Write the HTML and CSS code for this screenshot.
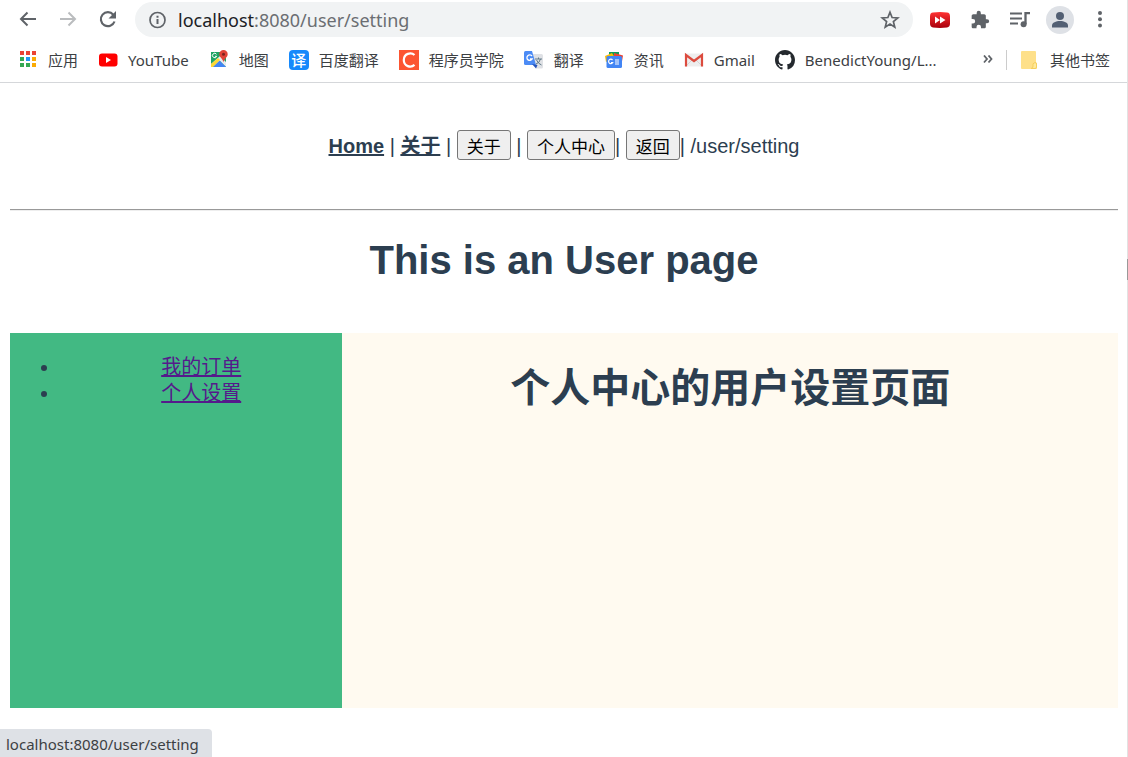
FILE: index.html
```
<!DOCTYPE html>
<html lang="zh-CN">
<head>
<meta charset="utf-8">
<title>User setting</title>
<link rel="stylesheet" href="styles.css">
</head>
<body>
<header class="browser">
  <div class="toolbar">
    <button class="tool" aria-label="Back"><svg width="20" height="20" viewBox="0 0 20 20" fill="none" stroke="#5f6368" stroke-width="2"><path d="M18 9H3M9.500 2.500 3 9l6.500 6.500"/></svg></button>
    <button class="tool" aria-label="Forward"><svg width="20" height="20" viewBox="0 0 20 20" fill="none" stroke="#babcbe" stroke-width="2"><path d="M2 9h15M10.500 2.500 17 9l-6.500 6.500"/></svg></button>
    <button class="tool" aria-label="Reload"><svg width="20" height="20" viewBox="0 0 20 20"><path d="M15.300 4.700A7 7 0 1 0 16.500 11.500" fill="none" stroke="#5f6368" stroke-width="2.200"/><path d="M18 1v7.500h-7.500z" fill="#5f6368"/></svg></button>
    <div class="address">
      <svg class="info" width="18" height="18" viewBox="0 0 18 18"><circle cx="9.500" cy="9" r="7.500" fill="none" stroke="#5f6368" stroke-width="1.700"/><path d="M9.500 8v5M9.500 4.800v1.900" stroke="#5f6368" stroke-width="2"/></svg>
      <span class="url"><span class="host">localhost</span>:8080/user/setting</span>
      <button class="tool" aria-label="Bookmark this page"><svg width="20" height="20" viewBox="0 0 20 20"><path d="m10 2.200 2.100 5.300 5.700.4-4.400 3.700 1.400 5.600-4.800-3.100-4.800 3.100 1.400-5.600-4.400-3.700 5.700-.4z" fill="none" stroke="#5f6368" stroke-width="1.700"/></svg></button>
    </div>
    <button class="tool" aria-label="Fast forward"><svg width="20" height="20" viewBox="0 0 20 20"><defs><linearGradient id="red" x2="0" y2="1"><stop stop-color="#f33"/><stop offset="1" stop-color="#a9000c"/></linearGradient></defs><path d="M3 2.500q7-1 14 0 3 .2 3 4v7q0 3.500-3 4-7 .8-14 0-3-.5-3-4v-7q0-3.800 3-4z" fill="url(#red)"/><path d="m5 6.500 5 3.500-5 3.500zm5 0 5.500 3.500-5.500 3.500z" fill="#fff"/></svg></button>
    <button class="tool" aria-label="Extensions"><svg width="20" height="20" viewBox="0 0 24 24"><path fill="#5f6368" d="M20.500 11H19V7c0-1.100-.9-2-2-2h-4V3.500a2.500 2.500 0 0 0-5 0V5H4c-1.100 0-2 .9-2 2v3.800h1.500a2.700 2.700 0 0 1 0 5.400H2V20c0 1.100.9 2 2 2h3.800v-1.500a2.700 2.700 0 0 1 5.400 0V22H17c1.100 0 2-.9 2-2v-4h1.500a2.500 2.500 0 0 0 0-5z"/></svg></button>
    <button class="tool" aria-label="Media"><svg width="20" height="20" viewBox="0 0 20 20"><path d="M0 3.500h12M0 8.500h12M0 13.500h8" stroke="#5f6368" stroke-width="2"/><path d="M15.500 14V3.200H20" fill="none" stroke="#5f6368" stroke-width="2.300"/><circle cx="13.600" cy="14.300" r="3" fill="#5f6368"/></svg></button>
    <button class="tool profile" aria-label="Profile"><svg width="28" height="28" viewBox="0 0 28 28"><circle cx="14" cy="14" r="14" fill="#dee1e6"/><circle cx="14" cy="10" r="4" fill="#525f73"/><path d="M6 21.500v-2c0-6 16-6 16 0v2z" fill="#525f73"/></svg></button>
    <button class="tool menu" aria-label="Menu"><svg width="20" height="20" viewBox="0 0 20 20" fill="#5f6368"><circle cx="10" cy="3" r="2"/><circle cx="10" cy="9.300" r="2"/><circle cx="10" cy="15.600" r="2"/></svg></button>
  </div>
  <nav class="bookmarks" aria-label="Bookmarks">
    <a class="bookmark" href="#"><svg width="20" height="20" viewBox="0 0 20 20"><path fill="#ea4335" d="M2 1h4v4H2zm6 0h4v4H8zm6 0h4v4h-4z"/><path fill="#34a853" d="M2 7h4v4H2zm0 6h4v4H2zm6 0h4v4H8z"/><path fill="#2196f3" d="M8 7h4v4H8z"/><path fill="#fbab05" d="M14 7h4v4h-4zm0 6h4v4h-4z"/></svg>应用</a>
    <a class="bookmark" href="#"><svg width="20" height="20" viewBox="0 0 20 20"><rect x="1" y="3.500" width="18.500" height="13" rx="3" fill="#f00"/><path d="m8 7 5 3-5 3z" fill="#fff"/></svg>YouTube</a>
    <a class="bookmark" href="#"><svg width="20" height="20" viewBox="0 0 20 20"><path d="M2 2h15v15H2z" fill="#1fa463"/><path d="m2 14 9-8 6 6v5l-6-6-7 6H2z" fill="#e8eaed"/><path d="m3.500 17 7-6.500 6.500 6.500z" fill="#4285f4"/><path d="m2 14 7-6 2 2-7 7H2z" fill="#fdd835"/><path d="M7.500 4.300a2.200 2.200 0 1 0 .2 2H6" fill="none" stroke="#fff"/><path d="M14.500 0a4.200 4.200 0 0 0-4.200 4.200c0 3 3.200 3.800 4.200 8 1-4.200 4.200-5 4.200-8A4.200 4.200 0 0 0 14.500 0z" fill="#e04437"/><circle cx="14.500" cy="4.200" r="1.500" fill="#7b231e"/></svg>地图</a>
    <a class="bookmark" href="#"><span class="badge">译</span>百度翻译</a>
    <a class="bookmark" href="#"><svg width="20" height="20" viewBox="0 0 20 20"><path fill="#fc5531" d="M0 0h20v20H0z"/><path d="M15.500 5C12 1.800 4.800 3.500 4.800 10s7 8.200 10.700 4.900" fill="none" stroke="#fff" stroke-width="2.200"/></svg>程序员学院</a>
    <a class="bookmark" href="#"><svg width="20" height="20" viewBox="0 0 20 20"><path d="M8 4h9.500q1.500 0 1.500 1.500V17q0 1.500-1.500 1.500H12z" fill="#dfe1e5"/><path d="M11 9h7M14.500 7.500V9m2 0q-1 4-4.500 5m.5-4q2 4 5 5" fill="none" stroke="#607988"/><path d="M1.500 1H8l4 14H1.500Q0 15 0 13.500v-11Q0 1 1.500 1z" fill="#4c8bf5"/><path d="m8 14 4 4.500 1.500-3.500z" fill="#2653b8"/><path d="M8 6a2.800 2.800 0 1 0 .2 3H6" fill="none" stroke="#fff" stroke-width="1.300"/></svg>翻译</a>
    <a class="bookmark" href="#"><svg width="20" height="20" viewBox="0 0 20 20"><path d="M5 2h10v6H5z" fill="#109d59"/><path d="m1 6 7-3 3 5-9 4z" fill="#fbbc04"/><path d="m10 3 9 2.500-1 6-8-2z" fill="#ea4335"/><rect x="2.500" y="6" width="15.500" height="12" rx="1.500" fill="#4285f4"/><path d="M8.500 10a2.200 2.200 0 1 0 .2 2.500H7M11 10h4M11 12h4M11 14h4" fill="none" stroke="#fff" stroke-width="1.200"/></svg>资讯</a>
    <a class="bookmark" href="#"><svg width="20" height="20" viewBox="0 0 20 20"><path d="M1 3.500h18v13H1z" fill="#eee"/><path d="m2 16 6-6m10 6-6-6" stroke="#d5d5d5"/><path d="M2 16.500V5l8 6 8-6v11.500" fill="none" stroke="#dc4b3e" stroke-width="2.200"/></svg>Gmail</a>
    <a class="bookmark" href="#"><svg width="20" height="20" viewBox="0 0 16 16"><path fill="#24292e" d="M8 0C3.580 0 0 3.580 0 8c0 3.540 2.290 6.530 5.470 7.590.4.070.55-.17.55-.38 0-.19-.01-.82-.01-1.490-2.010.37-2.530-.49-2.690-.94-.09-.23-.48-.94-.82-1.130-.28-.15-.68-.52-.01-.53.63-.01 1.080.58 1.230.82.72 1.210 1.870.87 2.330.66.070-.52.28-.87.51-1.070-1.780-.2-3.640-.89-3.640-3.950 0-.87.31-1.590.82-2.150-.08-.2-.36-1.020.08-2.120 0 0 .67-.21 2.200.82a7.600 7.600 0 0 1 4 0c1.530-1.040 2.200-.82 2.200-.82.44 1.100.16 1.920.08 2.120.51.56.82 1.270.82 2.150 0 3.070-1.870 3.750-3.650 3.950.29.25.54.73.54 1.480 0 1.070-.01 1.930-.01 2.200 0 .21.15.46.55.38A8 8 0 0 0 16 8c0-4.420-3.580-8-8-8z"/></svg>BenedictYoung/L...</a>
    <button class="more" aria-label="More bookmarks"><svg width="10" height="10" viewBox="0 0 10 10" fill="none" stroke="#5f6368" stroke-width="1.800"><path d="m1 .5 3 3.500-3 3.500m4.500-7 3 3.500-3 3.500"/></svg></button>
    <a class="bookmark other" href="#"><svg width="20" height="20" viewBox="0 0 20 20"><path d="M2 1h13q1 0 1 1v10l1 2v4q0 1-1 1H2q-1 0-1-1V2q0-1 1-1z" fill="#fee08a"/><path d="M15 12.500q-3 1-2 3.500.5 2-2 2.500h4q1.500 0 1.500-1.500v-3q0-1.500-1.500-1.500z" fill="#ffe99d" stroke="#f5cf5c"/></svg>其他书签</a>
  </nav>
</header>
<main class="page">
  <nav class="links"><a href="#">Home</a> | <a href="#">关于</a> | <button>关于</button> | <button>个人中心</button>| <button>返回</button>| /user/setting</nav>
  <hr>
  <h1>This is an User page</h1>
  <div class="panels">
    <aside class="side">
      <ul>
        <li><a href="#">我的订单</a></li>
        <li><a href="#">个人设置</a></li>
      </ul>
    </aside>
    <section class="content"><h1>个人中心的用户设置页面</h1></section>
  </div>
</main>
<div class="status">localhost:8080/user/setting</div>
<div class="edge"><div class="thumb"></div></div>
</body>
</html>
```
FILE: styles.css
```
* {
  box-sizing: border-box;
}

body {
  margin: 0;
  background: #fff;
  color: #2c3e50;
  font: 20px "Liberation Sans", "Noto Sans CJK SC", sans-serif;
  overflow: hidden;
}

.browser {
  height: 83px;
  border-bottom: 1px solid #d5d7da;
  font-family: "Noto Sans", "Noto Sans CJK SC", sans-serif;
}

.toolbar {
  display: flex;
  align-items: center;
  gap: 20px;
  height: 39px;
  padding: 0 18px;
}

.tool,
.more {
  display: flex;
  flex: none;
  padding: 0;
  border: 0;
  background: none;
}

.profile,
.menu {
  margin-left: -4px;
}

.address {
  display: flex;
  flex: 1;
  align-items: center;
  height: 35px;
  margin-left: -3px;
  margin-right: -3px;
  padding: 0 13px;
  border-radius: 18px;
  background: #f1f3f4;
}

.info {
  flex: none;
}

.url {
  flex: 1;
  margin-left: 12px;
  color: #6b6e72;
  font-size: 18px;
  line-height: 24px;
}

.host {
  color: #202124;
}

.bookmarks {
  display: flex;
  align-items: center;
  gap: 20px;
  height: 42px;
  padding: 0 18px;
}

.bookmark {
  display: flex;
  flex: none;
  align-items: center;
  gap: 10px;
  color: #3c4043;
  font-size: 15px;
  line-height: 20px;
  text-decoration: none;
}

.badge {
  width: 20px;
  height: 20px;
  border-radius: 4px;
  background: #1689fb;
  color: #fff;
  font-weight: 500;
  text-align: center;
}

.more {
  margin-left: auto;
  margin-right: -7px;
}

.other {
  padding-left: 13px;
  border-left: 1px solid #ccc;
}

.page {
  padding: 0 10px;
  text-align: center;
}

.links {
  padding: 47px 0 48px;
  line-height: 30px;
}

.links a {
  color: #2c3e50;
  font-weight: bold;
}

.links button {
  height: 30px;
  padding: 0 9px;
  border: 1px solid #767676;
  border-radius: 3px;
  background: #efefef;
  color: #000;
  font: 17px "Liberation Sans", "Noto Sans CJK SC", sans-serif;
}

hr {
  margin: 0;
  border: 0;
  border-top: 1px solid #999;
  border-bottom: 1px solid #eee;
}

h1 {
  margin: 26px 0 50px;
  font-size: 40px;
  line-height: 46px;
}

.panels {
  display: flex;
  min-height: 375px;
}

.side {
  width: 30%;
  background: #42b983;
}

.side ul {
  margin: 21px 0;
  padding-left: 50px;
}

.side li {
  line-height: 26px;
}

.side a {
  color: #551a8b;
}

.content {
  flex: 1;
  background: #fffaf0;
}

.content h1 {
  margin-top: 32px;
}

.status {
  position: fixed;
  left: 0;
  bottom: 0;
  padding: 5px 13px 3px 6px;
  border-top-right-radius: 4px;
  background: #dee1e6;
  color: #3c4043;
  font: 15px/20px "Noto Sans", sans-serif;
}

.edge {
  position: fixed;
  top: 0;
  right: 0;
  bottom: 0;
  width: 1px;
  padding-top: 259px;
  background: #e2e2e2;
}

.thumb {
  height: 21px;
  background: #999;
}
```
